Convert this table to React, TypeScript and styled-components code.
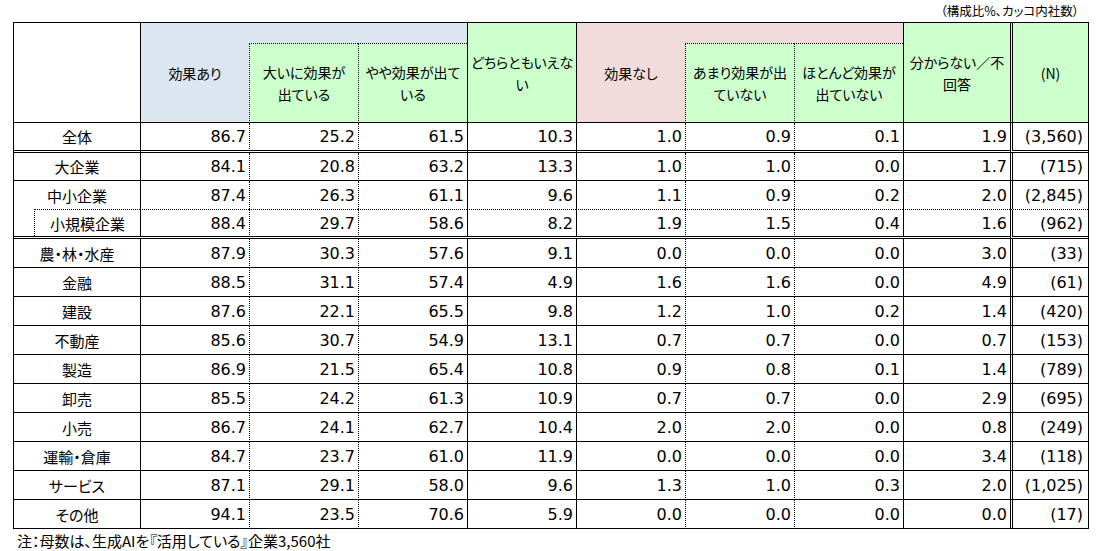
import React from 'react';
import styled, { createGlobalStyle } from 'styled-components';

const GlobalStyle = createGlobalStyle`
  html, body { margin: 0; padding: 0; background: #fff; }
  body { font-family: "Noto Sans CJK JP", "Noto Sans", sans-serif; color: #000; }
`;

const COLS = '126px repeat(7, 109px) 107px 78px';

type Tone = 'white' | 'blue' | 'green' | 'pink';
type Line = 'none' | 'solid' | 'dotted' | 'double';

const BG: Record<Tone, string> = {
  white: '#ffffff',
  blue: '#dce6f1',
  green: '#ccffcc',
  pink: '#f2dcdb',
};

const line = (l: Line = 'none') =>
  l === 'none' ? 'none' : l === 'double' ? '3px double #000' : `1px ${l} #000`;

const Page = styled.div`
  width: 1100px;
  height: 551px;
  padding-left: 13px;
  box-sizing: border-box;
  overflow: hidden;
  display: flex;
  flex-direction: column;
`;

const UnitNote = styled.div`
  width: 1076px;
  height: 22px;
  box-sizing: border-box;
  padding-right: 10px;
  display: flex;
  align-items: center;
  justify-content: flex-end;
  font-size: 12.5px;
  line-height: 1;
  font-feature-settings: "palt";
`;

const Table = styled.div`
  width: 1076px;
  box-sizing: border-box;
  border-top: 1px solid #000;
  border-left: 1px solid #000;
  border-right: 1px solid #000;
`;

const Header = styled.div`
  display: grid;
  grid-template-columns: ${COLS};
  grid-template-rows: 20px 80px;
`;

const HeadCell = styled.div<{
  $col: string;
  $row: string;
  $tone: Tone;
  $left?: Line;
  $top?: Line;
  $bottom?: Line;
}>`
  grid-column: ${(p) => p.$col};
  grid-row: ${(p) => p.$row};
  background: ${(p) => BG[p.$tone]};
  border-left: ${(p) => line(p.$left)};
  border-top: ${(p) => line(p.$top)};
  border-bottom: ${(p) => line(p.$bottom)};
  box-sizing: border-box;
  display: flex;
  align-items: center;
  justify-content: center;
  text-align: center;
  font-size: 14px;
  line-height: 22px;
  font-feature-settings: "palt";
  white-space: nowrap;
`;

const BodyRow = styled.div<{ $h: number }>`
  display: grid;
  grid-template-columns: ${COLS};
  height: ${(p) => p.$h}px;
`;

const LabelCell = styled.div<{ $top: Line; $bottom: Line; $indent: boolean }>`
  box-sizing: border-box;
  border-top: ${(p) => (p.$indent ? 'none' : line(p.$top))};
  border-bottom: ${(p) => line(p.$bottom)};
  padding-left: ${(p) => (p.$indent ? 20 : 0)}px;
  display: flex;
  align-items: stretch;
  font-size: 15px;
  font-feature-settings: "palt";
  white-space: nowrap;
`;

const LabelText = styled.div<{ $indent: boolean }>`
  flex: 1;
  display: flex;
  align-items: center;
  justify-content: center;
  border-left: ${(p) => (p.$indent ? '1px dotted #000' : 'none')};
  border-top: ${(p) => (p.$indent ? '1px dotted #000' : 'none')};
`;

const NumCell = styled.div<{ $left: Line; $top: Line; $bottom: Line; $wide?: boolean }>`
  box-sizing: border-box;
  border-left: ${(p) => line(p.$left)};
  border-top: ${(p) => line(p.$top)};
  border-bottom: ${(p) => line(p.$bottom)};
  display: flex;
  align-items: center;
  justify-content: flex-end;
  padding-right: ${(p) => (p.$wide ? 5 : 3)}px;
  font-family: "DejaVu Sans", "Noto Sans", sans-serif;
  font-size: 16px;
  white-space: nowrap;
`;

const FootNote = styled.div`
  padding-left: 4px;
  height: 22px;
  display: flex;
  align-items: center;
  font-size: 15px;
  font-feature-settings: "palt";
  white-space: nowrap;
`;

const colLines: Line[] = ['solid', 'dotted', 'dotted', 'solid', 'solid', 'dotted', 'dotted', 'solid', 'double'];

type RowDef = {
  label: string;
  values: string[];
  h: number;
  top: Line;
  bottom: Line;
  indent?: boolean;
};

const rows: RowDef[] = [
  { label: '全体', values: ['86.7', '25.2', '61.5', '10.3', '1.0', '0.9', '0.1', '1.9', '(3,560)'], h: 30, top: 'none', bottom: 'double' },
  { label: '大企業', values: ['84.1', '20.8', '63.2', '13.3', '1.0', '1.0', '0.0', '1.7', '(715)'], h: 28, top: 'none', bottom: 'solid' },
  { label: '中小企業', values: ['87.4', '26.3', '61.1', '9.6', '1.1', '0.9', '0.2', '2.0', '(2,845)'], h: 28, top: 'none', bottom: 'none' },
  { label: '小規模企業', values: ['88.4', '29.7', '58.6', '8.2', '1.9', '1.5', '0.4', '1.6', '(962)'], h: 30, top: 'dotted', bottom: 'double', indent: true },
  { label: '農・林・水産', values: ['87.9', '30.3', '57.6', '9.1', '0.0', '0.0', '0.0', '3.0', '(33)'], h: 29, top: 'none', bottom: 'solid' },
  { label: '金融', values: ['88.5', '31.1', '57.4', '4.9', '1.6', '1.6', '0.0', '4.9', '(61)'], h: 29, top: 'none', bottom: 'solid' },
  { label: '建設', values: ['87.6', '22.1', '65.5', '9.8', '1.2', '1.0', '0.2', '1.4', '(420)'], h: 29, top: 'none', bottom: 'solid' },
  { label: '不動産', values: ['85.6', '30.7', '54.9', '13.1', '0.7', '0.7', '0.0', '0.7', '(153)'], h: 29, top: 'none', bottom: 'solid' },
  { label: '製造', values: ['86.9', '21.5', '65.4', '10.8', '0.9', '0.8', '0.1', '1.4', '(789)'], h: 29, top: 'none', bottom: 'solid' },
  { label: '卸売', values: ['85.5', '24.2', '61.3', '10.9', '0.7', '0.7', '0.0', '2.9', '(695)'], h: 29, top: 'none', bottom: 'solid' },
  { label: '小売', values: ['86.7', '24.1', '62.7', '10.4', '2.0', '2.0', '0.0', '0.8', '(249)'], h: 29, top: 'none', bottom: 'solid' },
  { label: '運輸・倉庫', values: ['84.7', '23.7', '61.0', '11.9', '0.0', '0.0', '0.0', '3.4', '(118)'], h: 29, top: 'none', bottom: 'solid' },
  { label: 'サービス', values: ['87.1', '29.1', '58.0', '9.6', '1.3', '1.0', '0.3', '2.0', '(1,025)'], h: 29, top: 'none', bottom: 'solid' },
  { label: 'その他', values: ['94.1', '23.5', '70.6', '5.9', '0.0', '0.0', '0.0', '0.0', '(17)'], h: 29, top: 'none', bottom: 'solid' },
];

export default function App() {
  return (
    <>
      <GlobalStyle />
      <Page>
        <UnitNote>（構成比%、カッコ内社数）</UnitNote>
        <Table>
          <Header>
            <HeadCell $col="1" $row="1 / 3" $tone="white" $bottom="solid" />
            <HeadCell $col="2" $row="1 / 3" $tone="blue" $left="solid" $bottom="solid">効果あり</HeadCell>
            <HeadCell $col="3 / 5" $row="1" $tone="blue" />
            <HeadCell $col="3" $row="2" $tone="green" $left="dotted" $top="dotted" $bottom="solid">
              大いに効果が<br />出ている
            </HeadCell>
            <HeadCell $col="4" $row="2" $tone="green" $left="dotted" $top="dotted" $bottom="solid">
              やや効果が出て<br />いる
            </HeadCell>
            <HeadCell $col="5" $row="1 / 3" $tone="green" $left="solid" $bottom="solid">
              どちらともいえな<br />い
            </HeadCell>
            <HeadCell $col="6" $row="1 / 3" $tone="pink" $left="solid" $bottom="solid">効果なし</HeadCell>
            <HeadCell $col="7 / 9" $row="1" $tone="pink" />
            <HeadCell $col="7" $row="2" $tone="green" $left="dotted" $top="dotted" $bottom="solid">
              あまり効果が出<br />ていない
            </HeadCell>
            <HeadCell $col="8" $row="2" $tone="green" $left="dotted" $top="dotted" $bottom="solid">
              ほとんど効果が<br />出ていない
            </HeadCell>
            <HeadCell $col="9" $row="1 / 3" $tone="green" $left="solid" $bottom="solid">
              分からない／不<br />回答
            </HeadCell>
            <HeadCell $col="10" $row="1 / 3" $tone="green" $left="double" $bottom="solid">(N)</HeadCell>
          </Header>
          {rows.map((r) => (
            <BodyRow key={r.label} $h={r.h}>
              <LabelCell $top={r.top} $bottom={r.bottom} $indent={!!r.indent}>
                <LabelText $indent={!!r.indent}>{r.label}</LabelText>
              </LabelCell>
              {r.values.map((v, i) => (
                <NumCell key={i} $left={colLines[i]} $top={r.top} $bottom={r.bottom} $wide={i === 8}>
                  {v}
                </NumCell>
              ))}
            </BodyRow>
          ))}
        </Table>
        <FootNote>注：母数は、生成AIを『活用している』企業3,560社</FootNote>
      </Page>
    </>
  );
}
